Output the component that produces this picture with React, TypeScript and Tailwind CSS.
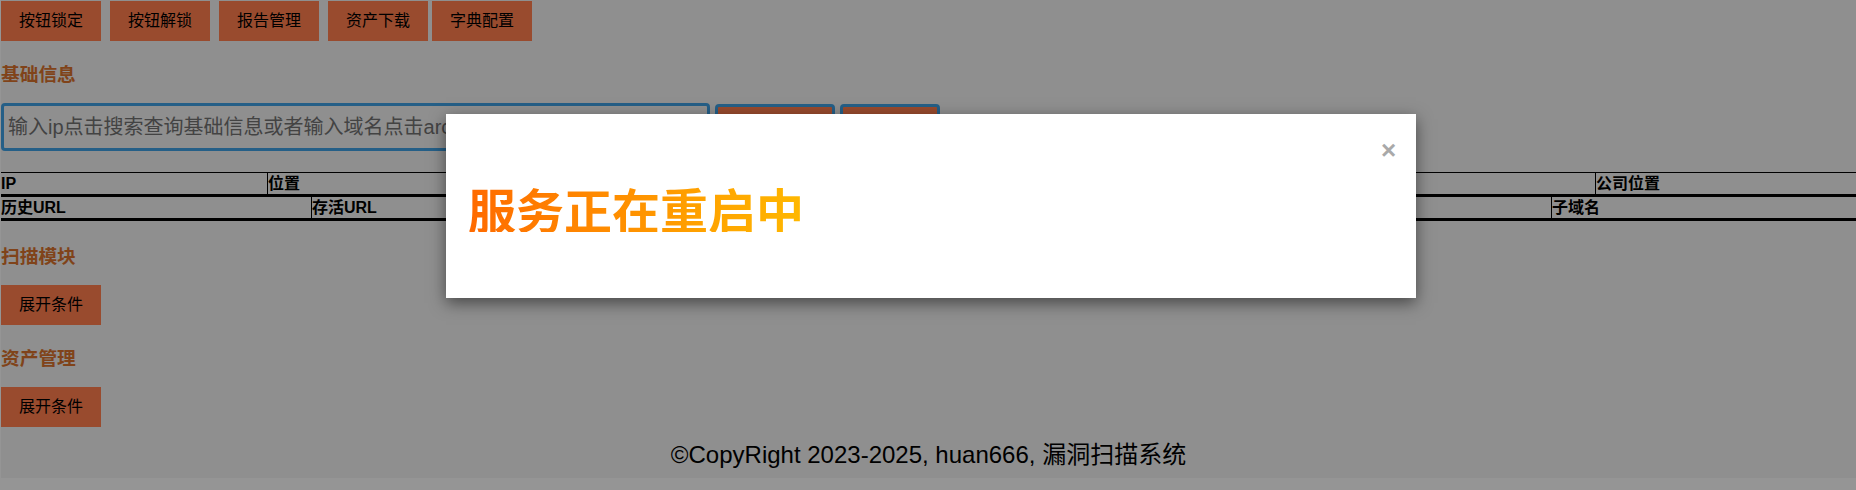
import React from "react";

const TOP_BUTTONS = ["按钮锁定", "按钮解锁", "报告管理", "资产下载", "字典配置"];

// column widths measured from the screenshot (px); middle columns sit under the modal
const TABLE_1 = [
  { label: "IP", w: 266 },
  { label: "位置", w: 353 },
  { label: "", w: 280 },
  { label: "", w: 300 },
  { label: "", w: 395 },
  { label: "公司位置", w: 261 },
];

const TABLE_2 = [
  { label: "历史URL", w: 310 },
  { label: "存活URL", w: 339 },
  { label: "", w: 330 },
  { label: "", w: 270 },
  { label: "", w: 301 },
  { label: "子域名", w: 305 },
];

const Btn = ({ children, className = "" }: any) => (
  <button className={"h-[40px] w-[100px] bg-[#ff7d4e] text-[16px] text-black " + className}>
    {children}
  </button>
);

const Heading = ({ children, className = "" }: any) => (
  <h3 className={"text-[18.72px] leading-[22px] font-bold text-[#d6712c] " + className}>{children}</h3>
);

const InfoTable = ({ cols }: any) => (
  <div className="flex h-[24px] border-b-[3px] border-black">
    {cols.map((c: any, i: number) => (
      <div
        key={i}
        className={
          "h-[21px] text-[16px] leading-[21px] font-bold text-black whitespace-nowrap " +
          (i > 0 ? "border-l border-black" : "")
        }
        style={{ width: c.w }}
      >
        {c.label}
      </div>
    ))}
  </div>
);

export default function App() {
  return (
    <div className="relative h-[490px] w-[1856px] overflow-hidden bg-[#f8f8f8] font-['Liberation_Sans','Noto_Sans_CJK_SC',sans-serif]">
      <div className="ml-px h-[478px] bg-[#eeeeee] pt-px">
        <div className="flex">
          <Btn>{TOP_BUTTONS[0]}</Btn>
          <Btn className="ml-[9px]">{TOP_BUTTONS[1]}</Btn>
          <Btn className="ml-[9px]">{TOP_BUTTONS[2]}</Btn>
          <Btn className="ml-[9px]">{TOP_BUTTONS[3]}</Btn>
          <Btn className="ml-[4px]">{TOP_BUTTONS[4]}</Btn>
        </div>

        <Heading className="mt-[23px]">基础信息</Heading>

        <div className="mt-[17px] flex h-[48px] items-start">
          <input
            className="h-[48px] w-[709px] rounded-[4px] border-[3px] border-[#3f9fe2] bg-transparent px-[4px] text-[20px] placeholder:text-[#707070] outline-none"
            placeholder="输入ip点击搜索查询基础信息或者输入域名点击arc查询子域名"
          />
          <button className="mt-px ml-[5px] h-[47px] w-[120px] rounded-[4px] border-[3px] border-[#3f9fe2] bg-[#ff7d4e]" />
          <button className="mt-px ml-[5px] h-[47px] w-[100px] rounded-[4px] border-[3px] border-[#3f9fe2] bg-[#ff7d4e]" />
        </div>

        <div className="mt-[21px] border-t border-black">
          <InfoTable cols={TABLE_1} />
          <InfoTable cols={TABLE_2} />
        </div>

        <Heading className="mt-[25px]">扫描模块</Heading>
        <Btn className="mt-[17px]">展开条件</Btn>

        <Heading className="mt-[23px]">资产管理</Heading>
        <Btn className="mt-[17px]">展开条件</Btn>

        <div className="pt-[14px] text-center text-[24px] leading-[27px] text-black">
          ©CopyRight 2023-2025, huan666, 漏洞扫描系统
        </div>
      </div>

      {/* modal backdrop */}
      <div className="absolute inset-0 bg-black/40" />

      <div className="absolute left-[446px] top-[114px] h-[184px] w-[970px] bg-white shadow-[0_5px_15px_rgba(0,0,0,0.5)]">
        <div className="absolute right-[20px] top-[28px] flex h-[15px] w-[15px] items-center justify-center text-[26px] leading-none font-bold text-[#a9a9a9]">
          ×
        </div>
        <div className="pl-[22px] pt-[70px]">
          <span className="inline-block bg-gradient-to-r from-[#ff6a00] to-[#ffb800] bg-clip-text text-[48px] leading-[48px] font-bold text-transparent font-['Noto_Sans_CJK_SC',sans-serif]">
            服务正在重启中
          </span>
        </div>
      </div>
    </div>
  );
}
